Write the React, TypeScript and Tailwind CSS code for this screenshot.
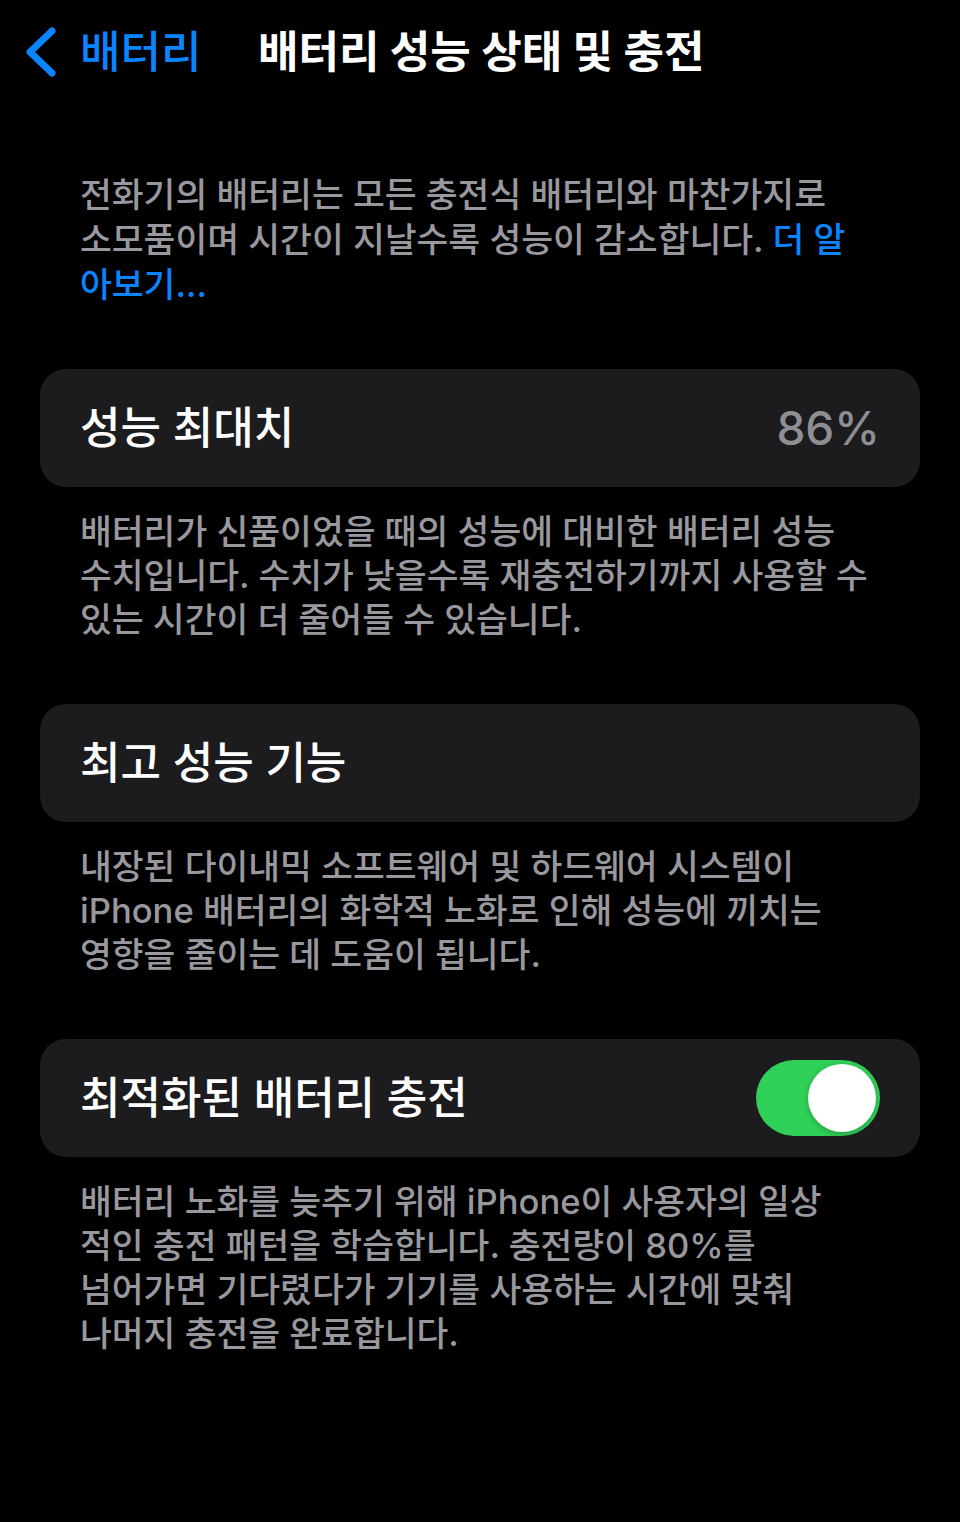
import React from 'react'

const FONT = 'Inter, "Noto Sans CJK KR", "Noto Sans", sans-serif'

function Footnote({ lines }: { lines: React.ReactNode[] }) {
    return (
        <div className="px-[80px] pt-[22px] text-[34.6px] leading-[44px] text-[#98989e] font-medium">
            {lines.map((l, i) => (
                <div key={i} className="whitespace-nowrap">{l}</div>
            ))}
        </div>
    )
}

function Card({ children }: { children: React.ReactNode }) {
    return (
        <div className="mx-[40px] h-[118px] rounded-[26px] bg-[#1c1c1e] px-[40px] flex items-center justify-between">
            {children}
        </div>
    )
}

export default function App() {
    return (
        <div className="w-[960px] min-h-[1522px] bg-black text-white" style={{ fontFamily: FONT }}>
            {/* Nav bar */}
            <div className="h-[104px] flex items-center">
                <div className="flex items-center pl-[20px] w-[258px]">
                    <svg width="40" height="56" viewBox="0 0 40 56" fill="none">
                        <path d="M32 7 L10 28 L32 49" stroke="#0a84ff" strokeWidth="7" strokeLinecap="round" strokeLinejoin="round" />
                    </svg>
                    <span className="ml-[20px] text-[44px] text-[#0a84ff] font-medium">배터리</span>
                </div>
                <span className="text-[44px] font-bold">배터리 성능 상태 및 충전</span>
            </div>

            {/* Intro */}
            <div className="px-[80px] pt-[68px] text-[34.6px] leading-[45px] text-[#98989e] font-medium">
                <div className="whitespace-nowrap">전화기의 배터리는 모든 충전식 배터리와 마찬가지로</div>
                <div className="whitespace-nowrap">
                    소모품이며 시간이 지날수록 성능이 감소합니다. <span className="text-[#0a84ff]">더 알</span>
                </div>
                <div className="whitespace-nowrap text-[#0a84ff]">아보기...</div>
            </div>

            <div className="h-[62px]" />
            <Card>
                <span className="text-[44px] font-medium">성능 최대치</span>
                <span className="text-[46px] text-[#8e8e93] font-medium">86%</span>
            </Card>
            <Footnote
                lines={[
                    '배터리가 신품이었을 때의 성능에 대비한 배터리 성능',
                    '수치입니다. 수치가 낮을수록 재충전하기까지 사용할 수',
                    '있는 시간이 더 줄어들 수 있습니다.',
                ]}
            />

            <div className="h-[63px]" />
            <Card>
                <span className="text-[44px] font-medium">최고 성능 기능</span>
            </Card>
            <Footnote
                lines={[
                    '내장된 다이내믹 소프트웨어 및 하드웨어 시스템이',
                    'iPhone 배터리의 화학적 노화로 인해 성능에 끼치는',
                    '영향을 줄이는 데 도움이 됩니다.',
                ]}
            />

            <div className="h-[63px]" />
            <Card>
                <span className="text-[44px] font-medium">최적화된 배터리 충전</span>
                <div className="w-[124px] h-[76px] rounded-full bg-[#30d158] flex items-center justify-end pr-[4px]">
                    <div className="w-[68px] h-[68px] rounded-full bg-white shadow-[0_2px_6px_rgba(0,0,0,0.25)]" />
                </div>
            </Card>
            <Footnote
                lines={[
                    '배터리 노화를 늦추기 위해 iPhone이 사용자의 일상',
                    '적인 충전 패턴을 학습합니다. 충전량이 80%를',
                    '넘어가면 기다렸다가 기기를 사용하는 시간에 맞춰',
                    '나머지 충전을 완료합니다.',
                ]}
            />
        </div>
    )
}
